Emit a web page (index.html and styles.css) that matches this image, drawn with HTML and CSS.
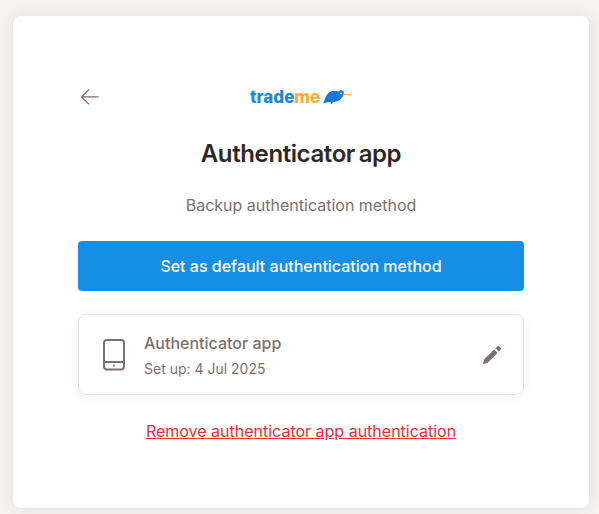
FILE: index.html
```html
<!DOCTYPE html>
<html lang="en">
<head>
    <meta charset="UTF-8">
    <meta name="viewport" content="width=device-width, initial-scale=1.0">
    <title>Authenticator app</title>
    <link rel="stylesheet" href="styles.css">
</head>
<body>
    <main class="panel">
        <div class="top-bar">
            <button class="back" aria-label="Back">
                <svg width="24" height="24" viewBox="0 0 24 24" fill="none" stroke="#7d6f6d" stroke-width="1.5">
                    <path d="M23 12H2.5M11.5 3L2.5 12l9 9" transform="translate(1.5 2) scale(.83)"/>
                </svg>
            </button>
            <div class="logo">
                <span class="logo-trade">trade</span><span class="logo-me">me</span>
                <svg class="kiwi" width="28" height="16" viewBox="0 0 28 16">
                    <path d="M0 14.500C1.500 12.500 2 8 4.500 5C7.500 1.500 12 1 15.500 2.500C16.500 .8 19.500 .6 20.500 2.500C21.500 4.500 20.500 7 18.500 9C16.500 11.500 13.500 13 10 13L9 15H7.500L8 13C5 13 3 13.500 0 14.500Z" fill="#1877d4"/>
                    <circle cx="18" cy="4.500" r="1.100" fill="#fff"/>
                    <path d="M20.500 5.200L28 6" stroke="#f5ae3c" stroke-width="1.200"/>
                </svg>
            </div>
        </div>

        <h1>Authenticator app</h1>
        <p class="subtitle">Backup authentication method</p>

        <button class="primary">Set as default authentication method</button>

        <div class="method">
            <svg class="device" width="24" height="33" viewBox="0 0 24 33" fill="none" stroke="#7d6f6d" stroke-width="2">
                <rect x="2" y="2" width="20" height="29.500" rx="3"/>
                <path d="M2 24H22"/>
                <circle cx="12" cy="27.800" r="1" fill="#7d6f6d" stroke="none"/>
            </svg>
            <div class="method-text">
                <div class="method-name">Authenticator app</div>
                <div class="method-date">Set up: 4 Jul 2025</div>
            </div>
            <svg class="edit" width="18" height="18" viewBox="0 0 18 18" fill="#7d6f6d">
                <path d="M0 18L1 13.400L11 3.600L14.500 7.100L4.500 17Z"/>
                <path d="M12.600 2.300L14.200 .7a1.700 1.700 0 0 1 2.400 0L17.400 1.500a1.700 1.700 0 0 1 0 2.400L15.800 5.500Z"/>
            </svg>
        </div>

        <a class="remove" href="#">Remove authenticator app authentication</a>
    </main>
</body>
</html>
```

FILE: styles.css
```css
* {
    box-sizing: border-box;
}
html, body {
    height: 100%;
}
body {
    margin: 0;
    padding: 16px 10px 6px 13px;
    background-color: #f4f3f1;
    font-family: Inter, sans-serif;
    overflow: hidden;
}
.panel {
    height: 492px;
    padding: 64px 65px 0;
    background-color: #fff;
    border-radius: 8px;
    box-shadow: 0 0 16px rgba(0, 0, 0, 0.09);
    display: flex;
    flex-direction: column;
    align-items: center;
}
.top-bar {
    width: 100%;
    height: 34px;
    display: flex;
    align-items: center;
    position: relative;
}
.back {
    padding: 0;
    border: none;
    background: none;
    width: 24px;
    height: 24px;
    cursor: pointer;
}
.logo {
    position: absolute;
    left: 172px;
    top: 5px;
    display: flex;
    align-items: center;
    font-family: Inter, sans-serif;
    font-weight: 800;
    font-size: 17px;
    line-height: 24px;
}
.logo-trade {
    color: #1a8ad6;
}
.logo-me {
    color: #f9ae36;
}
.kiwi {
    margin-left: 3px;
}
h1 {
    margin: 23px 0 0;
    font-family: Inter, sans-serif;
    font-size: 24px;
    line-height: 34px;
    font-weight: 600;
    letter-spacing: -0.4px;
    word-spacing: -2px;
    color: #2d2725;
}
.subtitle {
    margin: 22px 0 0;
    font-size: 16px;
    line-height: 24px;
    color: #7d6f6d;
}
.primary {
    width: 100%;
    height: 50px;
    margin-top: 24px;
    border: none;
    border-radius: 4px;
    background-color: #158fe5;
    color: #fff;
    font-family: Inter, sans-serif;
    font-size: 16px;
    font-weight: 500;
    cursor: pointer;
}
.method {
    width: 100%;
    height: 81px;
    margin-top: 23px;
    padding: 0 22px 0 23px;
    display: flex;
    align-items: center;
    border: 1px solid #e6e4e3;
    border-radius: 8px;
    box-shadow: 0 2px 12px rgba(0, 0, 0, 0.06);
}
.method-text {
    flex: 1;
    margin-left: 18px;
    padding-top: 1px;
}
.method-name {
    font-size: 16px;
    line-height: 24px;
    font-weight: 500;
    color: #7d6f6d;
}
.method-date {
    margin-top: 4px;
    font-size: 14px;
    line-height: 20px;
    color: #7d6f6d;
}
.remove {
    margin-top: 24px;
    font-size: 16px;
    line-height: 24px;
    color: #ee2b3b;
}
```
